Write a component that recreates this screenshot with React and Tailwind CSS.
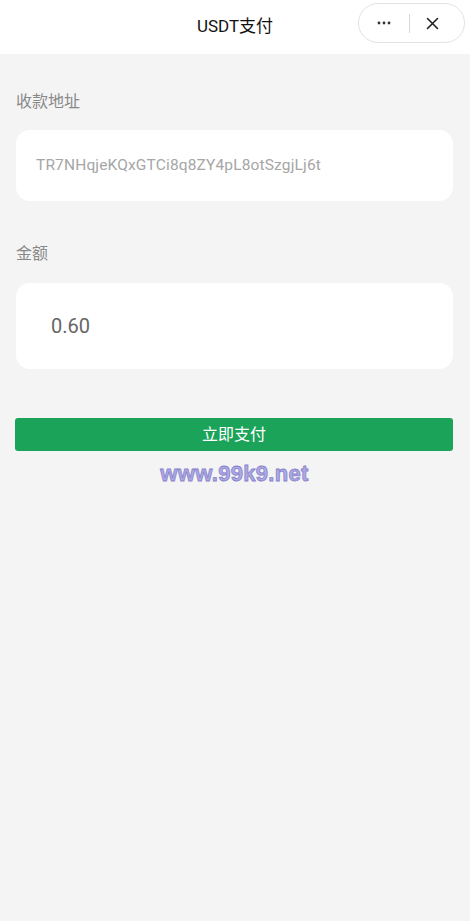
const App = () => {
    return (
        <div className="min-h-[921px] bg-[#f4f4f4] font-['Roboto','Noto_Sans_CJK_SC',sans-serif]">
            {/* Nav bar */}
            <div className="relative h-[54px] bg-white flex items-center justify-center">
                <span className="text-[17px] text-[#111]">USDT支付</span>
                <div className="absolute right-[5px] top-[3px] w-[107px] h-[40px] rounded-full border border-[#e3e3e3] bg-white flex items-center">
                    <div className="w-[50px] flex justify-center">
                        <svg width="16" height="4" viewBox="0 0 16 4">
                            <circle cx="3" cy="2" r="1.4" fill="#333" />
                            <circle cx="8" cy="2" r="1.4" fill="#333" />
                            <circle cx="13" cy="2" r="1.4" fill="#333" />
                        </svg>
                    </div>
                    <div className="w-px h-[19px] bg-[#d8d8d8]" />
                    <div className="flex-1 flex justify-center pr-[10px]">
                        <svg width="13" height="13" viewBox="0 0 13 13">
                            <path d="M1.5 1.5 L11.5 11.5 M11.5 1.5 L1.5 11.5" stroke="#222" strokeWidth="1.6" strokeLinecap="round" />
                        </svg>
                    </div>
                </div>
            </div>

            <div className="pl-4 pr-[17px]">
                {/* Address */}
                <div className="pt-[36px] text-[16px] text-[#888]">收款地址</div>
                <div className="mt-[16px] h-[71px] rounded-[14px] bg-white flex items-center pl-[20px] text-[15.5px] tracking-[0.15px] text-[#a6a6a6]">
                    TR7NHqjeKQxGTCi8q8ZY4pL8otSzgjLj6t
                </div>

                {/* Amount */}
                <div className="pt-[41px] text-[16px] text-[#888]">金额</div>
                <div className="mt-[17px] h-[86px] rounded-[14px] bg-white flex items-center pl-[35px] text-[20px] text-[#666]">
                    0.60
                </div>

                {/* Button */}
                <button className="mt-[49px] -ml-px w-[calc(100%+1px)] h-[33px] rounded-[3px] bg-[#1ca35a] text-white text-[16px] flex items-center justify-center">
                    立即支付
                </button>

                <div className="mt-[10px] flex justify-center">
                    <span className="font-['Liberation_Sans',sans-serif] font-bold text-[22px] leading-[26px] tracking-[0.3px] text-[#adaae3] [-webkit-text-stroke:0.8px_#8781cc]">
                        www.99k9.net
                    </span>
                </div>
            </div>
        </div>
    );
};

export default App;
